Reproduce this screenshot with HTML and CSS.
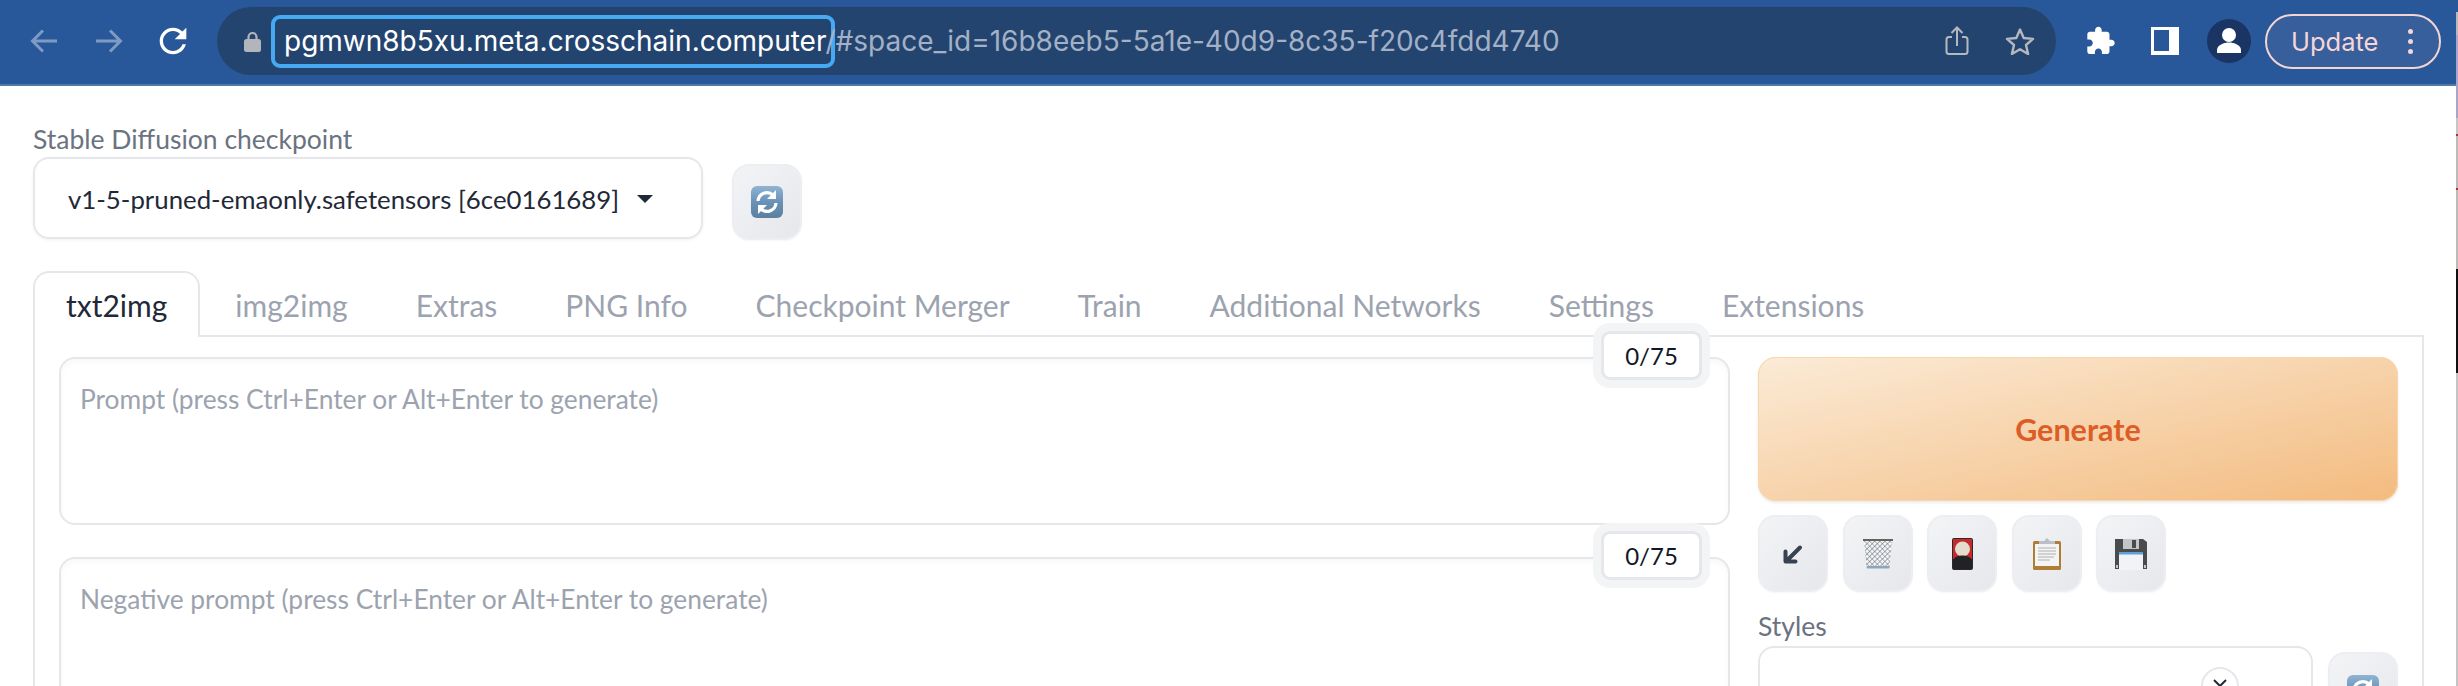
FILE: index.html
```html
<!DOCTYPE html>
<html lang="en">
<head>
<meta charset="utf-8">
<title>Stable Diffusion</title>
<link rel="stylesheet" href="styles.css">
</head>
<body>
<header class="toolbar">
  <svg class="nav nav-back" width="28" height="26" viewBox="0 0 28 26"><path d="M27 13H3M13 2.500 2.500 13 13 23.500" fill="none" stroke="#7f9bc4" stroke-width="3"/></svg>
  <svg class="nav nav-forward" width="28" height="26" viewBox="0 0 28 26"><path d="M1 13h24M15 2.500 25.500 13 15 23.500" fill="none" stroke="#7f9bc4" stroke-width="3"/></svg>
  <svg class="nav nav-reload" width="40" height="40" viewBox="0 0 24 24"><path fill="#fff" d="M17.650 6.350C16.200 4.900 14.210 4 12 4c-4.420 0-7.990 3.580-7.990 8s3.570 8 7.990 8c3.730 0 6.840-2.550 7.730-6h-2.080c-.82 2.330-3.040 4-5.650 4-3.310 0-6-2.690-6-6s2.690-6 6-6c1.660 0 3.140.69 4.220 1.780L13 11h7V4l-2.350 2.350z"/></svg>
  <div class="omnibox">
    <svg class="lock" width="17" height="21" viewBox="0 0 17 21"><path d="M4.500 9V6a4 4 0 0 1 8 0v3" fill="none" stroke="#b2b5ba" stroke-width="2.200"/><rect x="0" y="8" width="17" height="13" rx="2.500" fill="#b2b5ba"/></svg>
    <div class="url"><span class="url-host">pgmwn8b5xu.meta.crosschain.computer</span><span class="url-rest">/#space_id=16b8eeb5-5a1e-40d9-8c35-f20c4fdd4740</span></div>
    <svg class="omni-icon icon-share" width="24" height="30" viewBox="0 0 24 30"><path d="M7 11H4a2.500 2.500 0 0 0-2.500 2.500v12A2.500 2.500 0 0 0 4 28h16a2.500 2.500 0 0 0 2.500-2.500v-12A2.500 2.500 0 0 0 20 11h-3M12 20V2M6.500 7 12 1.500 17.500 7" fill="none" stroke="#b5b8bd" stroke-width="2"/></svg>
    <svg class="omni-icon icon-star" width="30" height="28" viewBox="0 0 30 28"><path d="m15 2.500 3.700 8.500 9.300.9-7 6.100 2.100 9-8.100-4.800-8.100 4.800 2.100-9-7-6.100 9.300-.9z" fill="none" stroke="#b5b8bd" stroke-width="2.400" stroke-linejoin="round"/></svg>
  </div>
  <svg class="tool tool-ext" width="30" height="30" viewBox="1 1 23 22"><path fill="#fff" d="M20.500 11H19V7c0-1.100-.9-2-2-2h-4V3.500C13 2.120 11.880 1 10.500 1S8 2.120 8 3.500V5H4c-1.100 0-1.990.9-1.990 2v3.800H3.500c1.490 0 2.700 1.210 2.700 2.700s-1.210 2.700-2.700 2.700H2V20c0 1.100.9 2 2 2h3.800v-1.500c0-1.490 1.210-2.700 2.700-2.700 1.490 0 2.700 1.210 2.700 2.700V22H17c1.100 0 2-.9 2-2v-4h1.500c1.380 0 2.500-1.120 2.500-2.500S21.880 11 20.500 11z"/></svg>
  <span class="tool tool-panel"></span>
  <svg class="tool tool-avatar" width="44" height="44" viewBox="0 0 44 44"><circle cx="22" cy="22" r="22" fill="#1a3564"/><circle cx="22" cy="16" r="7" fill="#fff"/><path d="M10 34v-3c0-5 7-7.500 12-7.500S34 26 34 31v3z" fill="#fff"/></svg>
  <button class="update"><span>Update</span><i class="dots"><b></b><b></b><b></b></i></button>
</header>

<main class="page">
  <section class="checkpoint">
    <div class="checkpoint-field">
      <label class="field-label">Stable Diffusion checkpoint</label>
      <div class="select"><span class="select-value">v1-5-pruned-emaonly.safetensors [6ce0161689]</span><span class="caret"></span></div>
    </div>
    <button class="tool-btn refresh-top">
      <svg width="32" height="32" viewBox="0 0 32 32"><use href="#emoji-refresh"/></svg>
    </button>
  </section>

  <nav class="tabs">
    <a class="tab active">txt2img</a>
    <a class="tab">img2img</a>
    <a class="tab">Extras</a>
    <a class="tab">PNG Info</a>
    <a class="tab">Checkpoint Merger</a>
    <a class="tab">Train</a>
    <a class="tab">Additional Networks</a>
    <a class="tab">Settings</a>
    <a class="tab">Extensions</a>
  </nav>

  <section class="panel">
    <div class="prompts">
      <div class="prompt">
        <textarea class="prompt-input" placeholder="Prompt (press Ctrl+Enter or Alt+Enter to generate)"></textarea>
        <span class="counter">0/75</span>
      </div>
      <div class="prompt">
        <textarea class="prompt-input" placeholder="Negative prompt (press Ctrl+Enter or Alt+Enter to generate)"></textarea>
        <span class="counter">0/75</span>
      </div>
    </div>
    <aside class="actions">
      <button class="generate">Generate</button>
      <div class="tools">
        <button class="tool-btn">
          <svg width="32" height="32" viewBox="0 0 32 32"><path d="M23 9.500 9.500 23M8.500 13.500V23.500H18.500" fill="none" stroke="#374151" stroke-width="4" stroke-linecap="round" stroke-linejoin="round"/></svg>
        </button>
        <button class="tool-btn">
          <svg width="32" height="32" viewBox="0 0 32 32">
            <defs><pattern id="mesh" width="3.600" height="3.600" patternUnits="userSpaceOnUse" patternTransform="rotate(45)"><path d="M0 0h3.600M0 0v3.600" stroke="#66717b" stroke-width="1.100" fill="none"/></pattern></defs>
            <path d="M2 2h28l-2.500 28h-23z" fill="#f4f5f6"/><path d="M2 2h28l-2.500 28h-23z" fill="url(#mesh)"/>
            <rect x="1" y="1" width="30" height="2" fill="#66625c"/><rect x="4.500" y="28" width="23" height="2.500" rx="1" fill="#8fa6ba"/>
          </svg>
        </button>
        <button class="tool-btn">
          <svg width="32" height="32" viewBox="0 0 32 32"><rect x="6" y="0" width="21" height="32" rx="2" fill="#2a2a2c"/><path d="M7 1h19v20H7z" fill="#c62a2c"/><circle cx="16.500" cy="11" r="7.500" fill="#e6dccb"/><path d="M7 22c2-3.500 6-4.500 9.500-4.500S24 18.500 26 22v9H7z" fill="#222224"/></svg>
        </button>
        <button class="tool-btn">
          <svg width="32" height="32" viewBox="0 0 32 32"><rect x="2" y="3" width="28" height="29" rx="1.500" fill="#b07d37"/><rect x="4" y="6" width="24" height="22" fill="#f4f4f4"/><path d="M7 10h18M7 13h18M7 16h18M7 19h16M7 22h12" stroke="#d2d2d2" stroke-width="2"/><path d="M16 0l3 3h5v3H8V3h5z" fill="#b9c0c8"/></svg>
        </button>
        <button class="tool-btn">
          <svg width="32" height="32" viewBox="0 0 32 32"><path d="M0 1h28l4 3v27H0z" fill="#4a4b4d"/><rect x="8" y="1" width="16" height="10" fill="#c4c5c7"/><rect x="17" y="2" width="4" height="8" fill="#4a4b4d"/><rect x="4" y="14" width="24" height="18" fill="#f2f3f5"/><rect x="4" y="14" width="24" height="2.500" fill="#5f9edb"/><rect x="1" y="27" width="2" height="3" fill="#c4c5c7"/><rect x="29" y="27" width="2" height="3" fill="#c4c5c7"/></svg>
        </button>
      </div>
      <label class="field-label styles-label">Styles</label>
      <div class="styles-row">
        <div class="styles-box"><span class="clear"><svg width="18" height="18" viewBox="0 0 18 18"><path d="M3 3l12 12M15 3 3 15" stroke="#1f2937" stroke-width="2"/></svg></span></div>
        <button class="tool-btn refresh-styles">
          <svg width="32" height="32" viewBox="0 0 32 32"><use href="#emoji-refresh"/></svg>
        </button>
      </div>
    </aside>
  </section>
</main>

<div class="window-edge"></div>

<svg class="sprites" width="0" height="0">
  <defs>
    <linearGradient id="refresh-bg" x1="0" y1="0" x2="0" y2="1"><stop offset="0" stop-color="#8fb4d4"/><stop offset=".5" stop-color="#6a92b6"/><stop offset="1" stop-color="#5c7f9f"/></linearGradient>
    <symbol id="emoji-refresh" viewBox="0 0 32 32">
      <rect x="0" y="0" width="32" height="32" rx="6" fill="url(#refresh-bg)"/>
      <path d="M7 15a9 9 0 0 1 15-6" fill="none" stroke="#fff" stroke-width="3.200"/><path d="M25 4v9h-9z" fill="#fff"/>
      <path d="M25 17a9 9 0 0 1-15 6" fill="none" stroke="#fff" stroke-width="3.200"/><path d="M7 28v-9h9z" fill="#fff"/>
    </symbol>
  </defs>
</svg>
</body>
</html>
```
FILE: styles.css
```css
* { box-sizing: border-box; }
html, body { margin: 0; height: 686px; overflow: hidden; background: #fff; }
body { font-family: "Lato", "Noto Sans", sans-serif; color: #1f2937; position: relative; }
button { font-family: inherit; }

.toolbar { display: flex; align-items: center; height: 86px; padding-bottom: 2px; background: #28579a; border-bottom: 2px solid #5277ab; }
.nav, .tool { flex: none; display: block; }
.nav-back { margin-left: 30px; }
.nav-forward { margin-left: 37px; }
.nav-reload { margin-left: 30px; }
.omnibox { flex: none; display: flex; align-items: center; width: 1839px; height: 68px; margin-left: 24px; border-radius: 34px; background: #244470; }
.lock { flex: none; margin-left: 27px; }
.url { flex: 1; display: flex; align-items: center; margin-left: 10px; font: 28px/1 "Inter", sans-serif; }
.url-host { display: flex; align-items: center; height: 53px; padding: 0 4px 0 9px; border: 4px solid #45aaf2; border-radius: 9px; color: #fff; }
.url-rest { margin-left: -9px; color: #a3b1c6; }
.omni-icon { flex: none; }
.icon-share { margin-right: 36px; }
.icon-star { margin-right: 21px; }
.tool-ext { margin-left: 30px; }
.tool-panel { width: 28px; height: 28px; margin-left: 35px; border: solid #fff; border-width: 3px 10px 4px 3px; }
.tool-avatar { margin-left: 28px; }
.update { flex: none; display: flex; align-items: center; width: 176px; height: 55px; margin-left: 14px; padding: 0 0 0 24px; border: 2px solid #f4d5d5; border-radius: 28px; background: #365f9b; color: #f6d6d6; font: 25.500px "Inter", sans-serif; }
.dots { display: flex; flex-direction: column; gap: 5px; margin-left: 30px; }
.dots b { display: block; width: 5px; height: 5px; border-radius: 50%; background: #f6d6d6; }

.page { padding: 0 34px 0 33px; }
.checkpoint { display: flex; align-items: flex-end; gap: 29px; padding-top: 38px; }
.checkpoint-field { width: 670px; }
.field-label { display: block; padding-bottom: 3px; font-size: 26.5px; line-height: 30px; color: #6b7280; }
.select { display: flex; align-items: center; height: 82px; padding: 2px 33px 0; border: 2px solid #e5e7eb; border-radius: 16px; box-shadow: 0 1px 3px rgba(0,0,0,.06); }
.select-value { font-size: 25.8px; color: #1f2937; white-space: nowrap; }
.caret { margin-left: 18px; border: solid transparent; border-width: 8px 8px 0; border-top-color: #1f2937; }

.tool-btn { display: flex; align-items: center; justify-content: center; flex: none; width: 70px; height: 77px; padding: 0; border: 2px solid #eceef1; border-radius: 17px; background: linear-gradient(135deg, #f3f4f6, #e6e7eb); box-shadow: 0 1px 2px rgba(0,0,0,.04); }
.refresh-top { height: 76px; margin-bottom: -1px; }

.tabs { display: flex; gap: 2px; height: 66px; margin-top: 32px; border-bottom: 2px solid #e5e7eb; }
.tab { display: block; height: 66px; padding: 0 33px; font-size: 30px; line-height: 69px; color: #9ca3af; white-space: nowrap; }
.tab.active { border: 2px solid #e5e7eb; border-bottom: 0; border-radius: 16px 16px 0 0; padding: 0 31px; line-height: 65px; background: #fff; color: #1f2937; }

.panel { display: flex; gap: 28px; padding: 20px 24px 0 24px; border: solid #e5e7eb; border-width: 0 2px; height: 400px; }
.prompts { flex: 1; display: flex; flex-direction: column; gap: 32px; }
.prompt { position: relative; }
.prompt-input { display: block; width: 100%; height: 168px; padding: 23px 19px; border: 2px solid #e5e7eb; border-radius: 16px; outline: 0; resize: none; font: 26.350px/1.3 "Lato", sans-serif; box-shadow: inset 0 3px 6px rgba(0,0,0,.03); }
.prompt-input::placeholder { color: #9ca3af; opacity: 1; }
.counter { position: absolute; top: -26px; right: 28px; width: 101px; height: 49px; border: 3px solid #e5e7eb; border-radius: 9px; background: #fff; box-shadow: 0 0 0 8px #f3f4f6; font-size: 24px; line-height: 43px; text-align: center; color: #111827; }

.actions { flex: none; width: 640px; }
.generate { display: block; width: 100%; height: 144px; border: 0; border-radius: 18px; background: linear-gradient(to bottom right, #fbebd7, #f3bb7f); box-shadow: 0 2px 3px rgba(0,0,0,.08), inset 0 0 0 1px #f9d6ab; color: #dd5d27; font-size: 30.500px; font-weight: 700; }
.tools { display: flex; gap: 14.500px; margin-top: 14px; }
.styles-label { margin-top: 19px; padding-bottom: 5px; }
.styles-row { display: flex; gap: 15px; }
.styles-box { position: relative; width: 556px; height: 120px; border: 2px solid #e5e7eb; border-radius: 16px; }
.clear { position: absolute; top: 19px; left: 441px; display: flex; align-items: center; justify-content: center; width: 38px; height: 38px; border: 2px solid #e5e7eb; border-radius: 50%; background: #fff; }
.refresh-styles { margin-top: 6px; }

.window-edge { position: absolute; top: 0; right: 0; width: 2px; height: 686px; background: linear-gradient(#28579a 0 12px, #b8b8bc 12px 35px, #a8a4cc 35px 118px, #c8c6c4 118px 134px, #a33 134px 136px, #bdbbb9 136px 188px, #a33 188px 190px, #bdbbb9 190px 269px, #111 269px 373px, #c4c4c4 373px); }
.sprites { position: absolute; }
```
